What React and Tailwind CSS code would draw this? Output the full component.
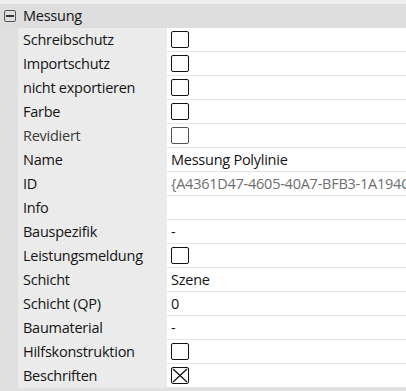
import React from "react";

const rows = [
  { label: "Schreibschutz", type: "check" },
  { label: "Importschutz", type: "check" },
  { label: "nicht exportieren", type: "check" },
  { label: "Farbe", type: "check" },
  { label: "Revidiert", type: "check", disabled: true },
  { label: "Name", type: "text", value: "Messung Polylinie" },
  { label: "ID", type: "text", value: "{A4361D47-4605-40A7-BFB3-1A194C2E0D11}", gray: true },
  { label: "Info", type: "text", value: "" },
  { label: "Bauspezifik", type: "text", value: "-" },
  { label: "Leistungsmeldung", type: "check" },
  { label: "Schicht", type: "text", value: "Szene" },
  { label: "Schicht (QP)", type: "text", value: "0" },
  { label: "Baumaterial", type: "text", value: "-" },
  { label: "Hilfskonstruktion", type: "check" },
  { label: "Beschriften", type: "check", checked: true },
];

function Check({ checked, disabled }) {
  return (
    <div
      className={
        "w-[18px] h-[17px] rounded-[2px] border bg-white flex items-center justify-center " +
        (disabled ? "border-[#555555]" : "border-[#111111]")
      }
    >
      {checked && (
        <svg width="16" height="15" viewBox="0 0 16 15">
          <path d="M1 1 L15 14 M15 1 L1 14" stroke="#111" strokeWidth="1.2" />
        </svg>
      )}
    </div>
  );
}

export default function App() {
  return (
    <div
      className="w-[406px] h-[391px] overflow-hidden bg-[#efefef] flex flex-col text-[14.5px] tracking-[-0.25px] text-[#141414]"
      style={{ fontFamily: '"Open Sans", "Noto Sans", sans-serif' }}
    >
      <div className="h-[4px] shrink-0" />
      <div className="h-[24px] shrink-0 bg-[#dedede] flex items-center">
        <div className="ml-[4px] w-[12px] h-[12px] rounded-[2px] border border-[#555555] flex items-center justify-center">
          <div className="w-[8px] h-[1.5px] bg-[#333333]" />
        </div>
        <span className="ml-[7px] leading-none">Messung</span>
      </div>
      <div className="flex bg-[#e0e0e0]">
        <div className="w-[18px] shrink-0" />
        <div className="flex-1 flex flex-col">
          {rows.map((r) => (
            <div key={r.label} className="h-[24px] flex">
              <div
                className={
                  "w-[149px] shrink-0 bg-[#ebebeb] pl-[5px] flex items-center whitespace-nowrap " +
                  (r.disabled ? "text-[#3a3a3a]" : "")
                }
              >
                {r.label}
              </div>
              <div className="flex-1 min-w-0 bg-white border-b border-[#e3e3e3] pl-[4px] flex items-center whitespace-nowrap overflow-hidden">
                {r.type === "check" ? (
                  <Check checked={r.checked} disabled={r.disabled} />
                ) : (
                  <span className={r.gray ? "text-[#6e6e6e]" : ""}>{r.value}</span>
                )}
              </div>
            </div>
          ))}
        </div>
      </div>
      <div className="flex-1 bg-[#e0e0e0]" />
    </div>
  );
}
